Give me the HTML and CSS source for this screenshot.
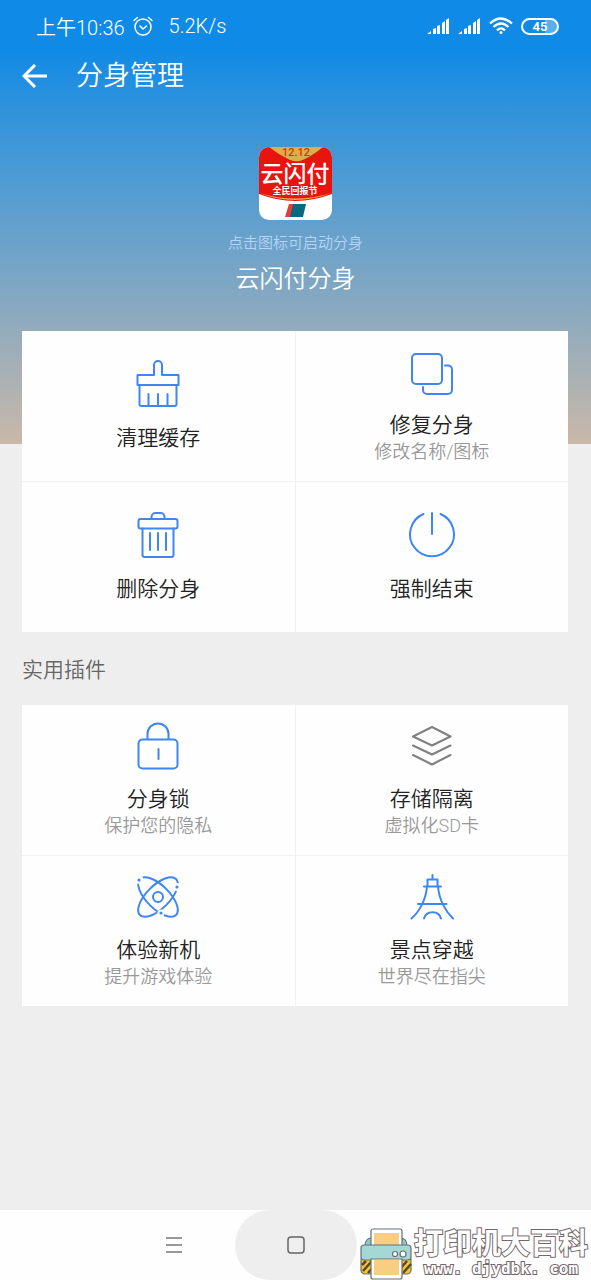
FILE: index.html
```html
<!DOCTYPE html>
<html lang="zh-CN">
<head>
<meta charset="utf-8">
<meta name="viewport" content="width=device-width, initial-scale=1">
<title>分身管理</title>
<link rel="stylesheet" href="styles.css">
</head>
<body>
<div class="page">
  <div class="status">
    <span>上午10:36</span>
    <svg class="alarm" width="20" height="20" viewBox="0 0 20 20" fill="none" stroke="#fff" stroke-width="1.500" stroke-linecap="round" stroke-linejoin="round"><circle cx="10" cy="11" r="8"/><path d="M7 10l3 3 3.500-3M1 4.500L4.500 1.500M19 4.500L15.500 1.500"/></svg>
    <span class="speed">5.2K/s</span>
    <svg class="signal" width="23" height="17" viewBox="0 0 23 17" fill="#fff"><path d="M0 16l4-3v3zM6 11l3-1v6H6zM10 8l3-1v9h-3zM15 5l3-2v13h-3zM19 2l3-2v16h-3z"/></svg>
    <svg class="signal" width="23" height="17" viewBox="0 0 23 17" fill="#fff"><path d="M0 16l4-3v3zM6 11l3-1v6H6zM10 8l3-1v9h-3zM15 5l3-2v13h-3zM19 2l3-2v16h-3z"/></svg>
    <svg class="wifi" width="24" height="18" viewBox="0 0 24 18" fill="none" stroke="#fff" stroke-width="2.300"><path d="M1 6.500Q12-3.500 23 6.500M4.500 10Q12 3 19.500 10M8 13.300Q12 9.500 16 13.300"/><circle cx="12" cy="15.500" r="1.500" fill="#fff" stroke="none"/></svg>
    <span class="battery">45</span>
  </div>

  <header class="bar">
    <button class="back" aria-label="返回"><svg width="26" height="24" viewBox="0 0 26 24" fill="none" stroke="#fff" stroke-width="3"><path d="M13 1L2 12l11 11M2 12h23"/></svg></button>
    <h1>分身管理</h1>
  </header>

  <section class="app">
    <button class="launch" aria-label="启动云闪付分身">
      <svg width="73" height="73" viewBox="0 0 73 73">
        <defs><clipPath id="round"><rect width="73" height="73" rx="10"/></clipPath></defs>
        <g clip-path="url(#round)">
          <rect width="73" height="73" fill="#fff"/>
          <path d="M0 0h73v47Q36 61 0 47z" fill="#e8150f"/>
          <path d="M0 46Q36 60 73 46Q36 57 0 46z" fill="#e5b44c"/>
          <path d="M10 0h54Q52 10 41 14Q36 15 31 13Q20 8 10 0z" fill="#d9b04b"/>
          <text class="promo" x="37" y="9">12.12</text>
          <text class="brand" x="36" y="35">云闪付</text>
          <text class="slogan" x="36" y="47">全民回报节</text>
          <path d="M30 57h8l-3 13h-9z" fill="#e73c35"/>
          <path d="M34 57h13l-3 13H31z" fill="#086a80"/>
        </g>
      </svg>
    </button>
    <p class="hint">点击图标可启动分身</p>
    <h2>云闪付分身</h2>
  </section>

  <main>
    <section class="grid">
      <button class="tile"><svg class="icon" viewBox="0 0 48 48"><path d="M20 11V1a4 4 0 0 1 8 0v10h16.500v10h-41V11zM5.500 21v19a2 2 0 0 0 2 2h33a2 2 0 0 0 2-2V21M14.500 30v11M24 30v11M33.500 30v11"/></svg><span class="name">清理缓存</span></button>
      <button class="tile"><svg class="icon" viewBox="0 0 48 48"><rect x="4" y="3" width="30" height="30" rx="4"/><path d="M37 14.500h3a4 4 0 0 1 4 4V39a4 4 0 0 1-4 4H19a4 4 0 0 1-4-4v-3"/></svg><span class="name">修复分身</span><span class="note">修改名称/图标</span></button>
      <button class="tile"><svg class="icon" viewBox="0 0 48 48"><rect x="4.500" y="4" width="39" height="9.500" rx="2"/><path d="M17.500 4V2a4 4 0 0 1 4-4h5a4 4 0 0 1 4 4v2M8.500 13.500V40a2 2 0 0 0 2 2h27a2 2 0 0 0 2-2V13.500M16 18v17M24 18v17M32 18v17"/></svg><span class="name">删除分身</span></button>
      <button class="tile"><svg class="icon" viewBox="0 0 48 48"><path d="M24-2v21M15.500-1a22 22 0 1 0 17 0"/></svg><span class="name">强制结束</span></button>
    </section>

    <h3>实用插件</h3>

    <section class="grid">
      <button class="tile"><svg class="icon" viewBox="0 0 48 48"><rect x="4.500" y="14.500" width="39" height="29" rx="4"/><path d="M13.500 14V9a10.500 10.500 0 0 1 21 0v5M24.500 24v10"/></svg><span class="name">分身锁</span><span class="note">保护您的隐私</span></button>
      <button class="tile"><svg class="icon gray" viewBox="0 0 48 48"><path d="M24 2l18.500 9.500L24 20.500 5 11.500zM5 20.500l19 9 18.500-9M5 30l19 9.500L42.500 30"/></svg><span class="name">存储隔离</span><span class="note">虚拟化SD卡</span></button>
      <button class="tile"><svg class="icon" viewBox="0 0 48 48"><ellipse cx="24" cy="21" rx="25.500" ry="11.500" transform="rotate(45 24 21)"/><ellipse cx="24" cy="21" rx="25.500" ry="11.500" transform="rotate(-45 24 21)"/><circle cx="24" cy="21" r="5"/><g stroke="none" fill="#fefefe"><circle cx="5.500" cy="4" r="4"/><circle cx="43" cy="11" r="4"/><circle cx="27" cy="37" r="3.500"/></g><g stroke="none" fill="#3f86f0"><circle cx="5" cy="4" r="1.600"/><circle cx="43" cy="11" r="1.600"/><circle cx="27" cy="37" r="1.600"/></g></svg><span class="name">体验新机</span><span class="note">提升游戏体验</span></button>
      <button class="tile"><svg class="icon" viewBox="0 0 48 48"><path d="M24.500-1v4M19.500 10V3.500h10V10M16 10.500h17M10 28h28.500M19 10.500C18 24 11 36 3.500 42.500M30 10.500C31 24 38 36 45 42.500M16 42.500C18 34 31 34 33 42.500"/></svg><span class="name">景点穿越</span><span class="note">世界尽在指尖</span></button>
    </section>
  </main>

  <nav class="nav">
    <button aria-label="菜单"><svg width="18" height="18" viewBox="0 0 18 18" fill="none" stroke="#777" stroke-width="1.500"><path d="M1 2h16M1 9h16M1 16h16"/></svg></button>
    <button class="home" aria-label="主屏幕"><svg width="18" height="18" viewBox="0 0 18 18" fill="none" stroke="#666" stroke-width="1.500"><rect x="1" y="1" width="16" height="16" rx="3"/></svg></button>
    <div class="mark">
      <svg width="52" height="52" viewBox="0 0 52 52" stroke="#667078" stroke-width="1.200">
        <path d="M5 18q0-8 7-8h28q7 0 7 8z" fill="#8fcac8"/>
        <rect x="1" y="28" width="50" height="18" rx="4" fill="#ffc21e"/>
        <path d="M3 43l9-10M8 45l9-10M2 37l4-4M38 43l9-10M43 45l8-9" stroke="#4c4a42" stroke-width="2.500"/>
        <rect x="11" y="1" width="31" height="20" rx="2" fill="#fff"/>
        <path d="M14 5h25v15H14z" fill="#f8cf82" stroke="none"/>
        <rect x="1" y="17" width="50" height="15" rx="3" fill="#a4d8d5"/>
        <path d="M11 31h31v18q0 2-2 2H13q-2 0-2-2z" fill="#fff"/>
        <path d="M14 32h25v15H14z" fill="#f8cf82" stroke="none"/>
        <circle cx="35" cy="26" r="2.500" fill="#fff"/><circle cx="43" cy="26" r="3" fill="#fff"/>
      </svg>
      <div class="words"><span class="site">打印机大百科</span><span class="url">www. djydbk. com</span></div>
    </div>
  </nav>
</div>
</body>
</html>
```

FILE: styles.css
```css
* { box-sizing: border-box; }
body {
  margin: 0;
  font-family: Roboto, "Noto Sans CJK SC", sans-serif;
  font-weight: 350;
  color: #222;
}
button {
  border: 0;
  padding: 0;
  background: none;
  font: inherit;
  color: inherit;
}
svg { display: block; flex: none; }
h1, h2, h3, p { margin: 0; font-weight: 350; }

.page {
  min-height: 100vh;
  display: flex;
  flex-direction: column;
  background: #eee linear-gradient(#0f8ae6 48px, #2f92dc 105px, #4398d6 155px, #81a7c2 290px, #cab8a8 444px) no-repeat top / 100% 444px;
}

.status {
  display: flex;
  align-items: center;
  height: 52px;
  padding: 0 32px 0 36px;
  color: #fff;
  font-size: 20px;
}
.alarm { margin-left: 8px; }
.speed { margin: 0 auto 0 16px; }
.signal { margin-right: 8px; }
.wifi { margin-right: 8px; }
.battery {
  width: 38px;
  height: 17px;
  border: 2px solid #fff;
  border-radius: 9px;
  background: linear-gradient(90deg, transparent 65%, #58b0ee 65%);
  font-size: 13px;
  font-weight: 700;
  line-height: 13px;
  text-align: center;
}

.bar {
  display: flex;
  align-items: center;
  gap: 28px;
  height: 48px;
  padding-left: 22px;
  color: #fff;
}
.bar h1 { font-size: 27px; line-height: 36px; }

.app {
  display: flex;
  flex-direction: column;
  align-items: center;
  padding: 47px 0 34px;
  color: #fff;
}
.hint {
  margin-top: 12px;
  font-size: 15px;
  line-height: 22px;
  color: #b4d4fa;
}
.app h2 { margin-top: 8px; font-size: 24px; line-height: 35px; }
.promo, .brand, .slogan { text-anchor: middle; fill: #fff; }
.promo { font-size: 11px; font-weight: 500; fill: #d8301c; }
.brand { font-size: 23px; font-weight: 500; }
.slogan { font-size: 9px; font-weight: 700; }

main { flex: 1; padding: 0 23px 0 22px; }
.grid {
  display: grid;
  grid-template-columns: 1fr 1fr;
  grid-auto-rows: minmax(150px, auto);
  gap: 1px;
  background: #f1f1f1;
}
.tile {
  display: flex;
  flex-direction: column;
  align-items: center;
  justify-content: center;
  padding-top: 4px;
  background: #fefefe;
}
.icon {
  width: 48px;
  height: 48px;
  margin-bottom: 12px;
  overflow: visible;
  fill: none;
  stroke: #3f86f0;
  stroke-width: 2;
  stroke-linecap: round;
  stroke-linejoin: round;
}
.gray { stroke: #808080; }
.name { font-size: 21px; line-height: 28px; }
.note { font-size: 18px; line-height: 26px; color: #999; }
h3 { padding: 24px 0 21px; font-size: 21px; line-height: 28px; color: #666; }

.nav {
  position: relative;
  display: grid;
  grid-template-columns: repeat(3, 122px);
  justify-content: center;
  height: 70px;
  background: #fefefe;
}
.nav button { display: grid; place-items: center; }
.home { border-radius: 35px; background: #eee; }
.mark {
  position: absolute;
  right: 3px;
  bottom: 0;
  display: flex;
  align-items: center;
  gap: 2px;
}
.words {
  display: flex;
  flex-direction: column;
  align-items: center;
  color: #fff;
  font-weight: 700;
  -webkit-text-stroke: 2px #75666a;
  paint-order: stroke fill;
}
.site { font-size: 29px; line-height: 30px; }
.url { font-family: "DejaVu Sans Mono", monospace; font-size: 16px; line-height: 20px; white-space: pre; }
```
